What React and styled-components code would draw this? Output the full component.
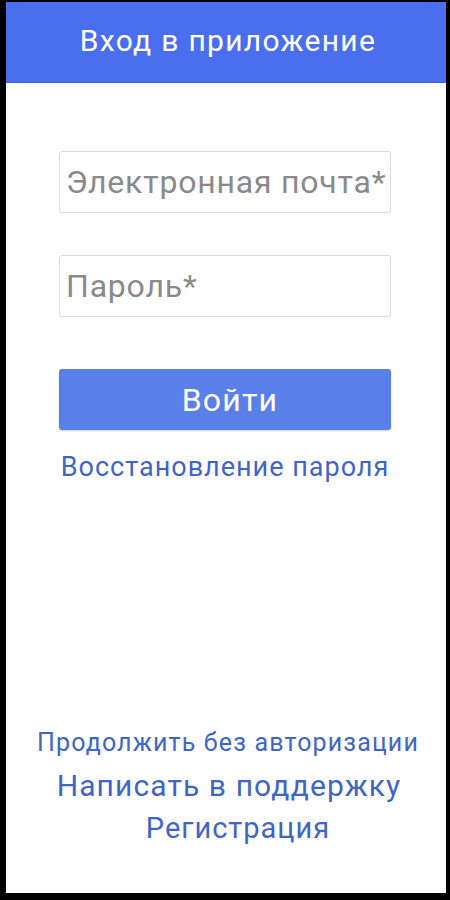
import React from "react";
import styled, { createGlobalStyle } from "styled-components";

const Global = createGlobalStyle`
  html, body { margin: 0; padding: 0; background: #000; }
  * { box-sizing: border-box; }
  body { font-family: Roboto, "Noto Sans", sans-serif; }
`;

const Frame = styled.div`
  width: 450px;
  height: 900px;
  padding: 2px 4px 7px 6px;
  background: #000;
`;

const Screen = styled.div`
  height: 100%;
  background: #fff;
  display: flex;
  flex-direction: column;
`;

const Header = styled.header`
  height: 81px;
  background: #4a6fee;
  border-bottom: 1px solid #3f5fd0;
  display: flex;
  align-items: center;
  justify-content: center;
  color: #fff;
  font-size: 30px;
  letter-spacing: 1.3px;
  padding: 0 0 3px 4px;
`;

const Form = styled.div`
  display: flex;
  flex-direction: column;
  align-items: stretch;
  padding: 68px 55px 0 53px;
`;

const Field = styled.input`
  height: 62px;
  border: 1px solid #dcdcdc;
  border-radius: 3px;
  padding: 0 1px 0 6px;
  font-family: Roboto, sans-serif;
  font-size: 32px;
  letter-spacing: 0.8px;
  color: #333;
  outline: none;
  margin-bottom: ${p => p.$gap}px;
  &::placeholder { color: #8a8a8a; }
`;

const Button = styled.button`
  height: 61px;
  border: none;
  border-radius: 3px;
  background: #5b7fe8;
  color: #fff;
  font-family: Roboto, sans-serif;
  font-size: 32px;
  letter-spacing: 1.2px;
  padding: 0 0 0 10px;
  box-shadow: 0 1px 2px rgba(0,0,0,0.2);
`;

const Link = styled.a`
  display: block;
  text-align: center;
  color: #3f65c7;
  font-size: ${p => p.$size}px;
  line-height: ${p => p.$lh}px;
  letter-spacing: ${p => p.$ls}px;
  margin-left: ${p => p.$shift || 0}px;
  text-decoration: none;
  white-space: nowrap;
`;

const Recover = styled(Link)`
  margin-top: 20px;
`;

const Spacer = styled.div`
  flex: 1;
`;

const Bottom = styled.div`
  display: flex;
  flex-direction: column;
  align-items: center;
  padding-bottom: 45px;
`;

export default function App() {
  return (
    <>
      <Global />
      <Frame>
        <Screen>
          <Header>Вход в приложение</Header>
          <Form>
            <Field $gap={42} placeholder="Электронная почта*" />
            <Field $gap={52} type="password" placeholder="Пароль*" />
            <Button>Войти</Button>
            <Recover $size={27} $lh={34} $ls={1}>Восстановление пароля</Recover>
          </Form>
          <Spacer />
          <Bottom>
            <Link $size={25} $lh={42} $ls={1.15} $shift={4}>Продолжить без авторизации</Link>
            <Link $size={30} $lh={44} $ls={1.1} $shift={6}>Написать в поддержку</Link>
            <Link $size={29} $lh={40} $ls={1} $shift={24}>Регистрация</Link>
          </Bottom>
        </Screen>
      </Frame>
    </>
  );
}
